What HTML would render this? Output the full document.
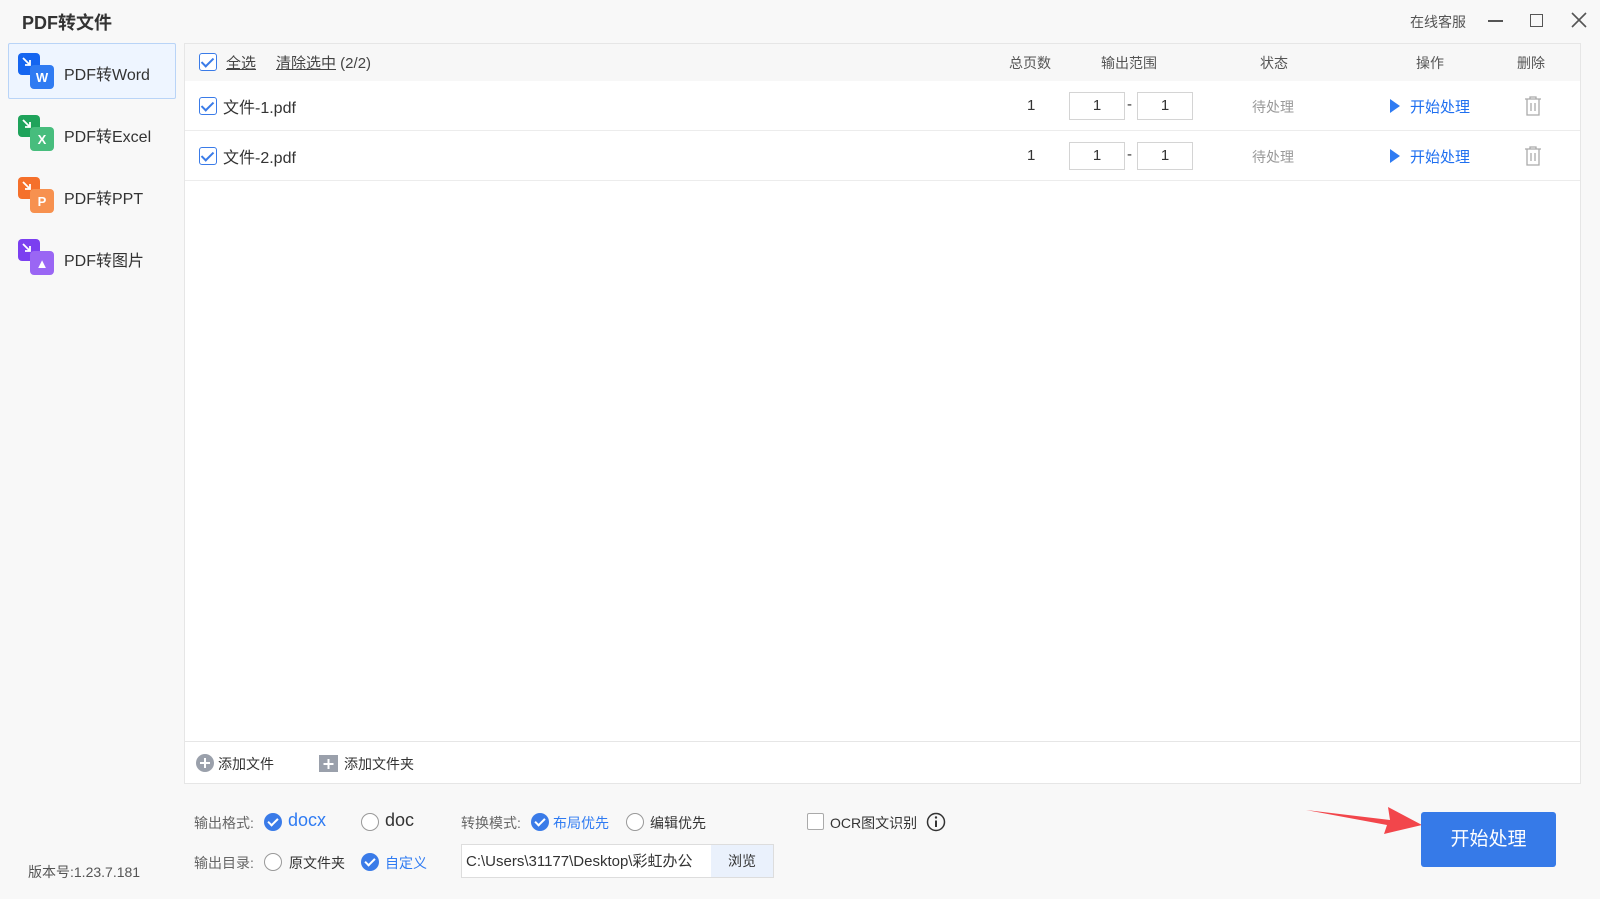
<!DOCTYPE html>
<html><head><meta charset="utf-8"><style>
*{margin:0;padding:0;box-sizing:border-box}
body{width:1600px;height:899px;background:#f8f8f8;font-family:"Liberation Sans","Noto Sans CJK SC",sans-serif;color:#333;position:relative;overflow:hidden;font-size:15px}
.a{position:absolute;white-space:nowrap}
.cb{position:absolute;width:18px;height:18px;border:1.5px solid #3a7be8;border-radius:3px;background:#fff}
.cb:after{content:"";position:absolute;left:4px;top:1px;width:5px;height:10px;border:solid #3a7be8;border-width:0 2px 2px 0;transform:rotate(45deg)}
.rc{position:absolute;width:18px;height:18px;border-radius:50%;background:#3a7be8}
.rc:after{content:"";position:absolute;left:6px;top:3px;width:4px;height:8px;border:solid #fff;border-width:0 2px 2px 0;transform:rotate(45deg)}
.ro{position:absolute;width:18px;height:18px;border-radius:50%;border:1.5px solid #999;background:#fff}
.inp{position:absolute;width:56px;height:28px;border:1px solid #d4d4d4;background:#fff;text-align:center;line-height:26px;font-size:15px}
.ic{position:absolute;width:36px;height:36px}
.ic .b1{position:absolute;left:0;top:0;width:22px;height:22px;border-radius:4px}
.ic .b1 svg{position:absolute;left:4px;top:4px}
.ic .b2{position:absolute;left:12px;top:12px;width:24px;height:24px;border-radius:4px;color:#fff;font-weight:bold;font-size:13px;text-align:center;line-height:26px}
.nav{position:absolute;left:64px;font-size:16px;color:#333}
</style></head><body>
<div class="a" style="left:22px;top:9px;font-size:18px;font-weight:bold;color:#333">PDF转文件</div>
<div class="a" style="left:1410px;top:12px;font-size:14px;color:#555">在线客服</div>
<div class="a" style="left:1488px;top:20px;width:15px;height:1.5px;background:#555"></div>
<div class="a" style="left:1530px;top:14px;width:13px;height:13px;border:1.5px solid #555"></div>
<svg class="a" style="left:1571px;top:12px" width="16" height="16"><path d="M1 1L15 15M15 1L1 15" stroke="#555" stroke-width="1.6"/></svg>

<div class="a" style="left:8px;top:43px;width:168px;height:56px;background:#eef5ff;border:1px solid #b9d4f7;border-radius:2px"></div>
<div class="ic" style="left:18px;top:53px"><div class="b1" style="background:#1565f0"><svg width="10" height="10"><path d="M1 1L8 8M8 3V8H3" stroke="#fff" stroke-width="1.8" fill="none"/></svg></div><div class="b2" style="background:#2f7bf2">W</div></div>
<div class="nav" style="top:61px">PDF转Word</div>
<div class="ic" style="left:18px;top:115px"><div class="b1" style="background:#1fa35b"><svg width="10" height="10"><path d="M1 1L8 8M8 3V8H3" stroke="#fff" stroke-width="1.8" fill="none"/></svg></div><div class="b2" style="background:#47bd7d">X</div></div>
<div class="nav" style="top:123px">PDF转Excel</div>
<div class="ic" style="left:18px;top:177px"><div class="b1" style="background:#f5702b"><svg width="10" height="10"><path d="M1 1L8 8M8 3V8H3" stroke="#fff" stroke-width="1.8" fill="none"/></svg></div><div class="b2" style="background:#f7914f">P</div></div>
<div class="nav" style="top:185px">PDF转PPT</div>
<div class="ic" style="left:18px;top:239px"><div class="b1" style="background:#7b3ff0"><svg width="10" height="10"><path d="M1 1L8 8M8 3V8H3" stroke="#fff" stroke-width="1.8" fill="none"/></svg></div><div class="b2" style="background:#9a66f4">▲</div></div>
<div class="nav" style="top:247px">PDF转图片</div>
<div class="a" style="left:28px;top:862px;font-size:14px;color:#555">版本号:1.23.7.181</div>

<div class="a" style="left:184px;top:43px;width:1397px;height:741px;background:#fff;border:1px solid #e6e6e6"></div>
<div class="a" style="left:185px;top:44px;width:1395px;height:37px;background:#f7f7f7"></div>
<div class="cb" style="left:199px;top:53px"></div>
<div class="a" style="left:226px;top:52px;text-decoration:underline;color:#444">全选</div>
<div class="a" style="left:276px;top:52px;color:#444"><u>清除选中</u> (2/2)</div>
<div class="a" style="left:1009px;top:53px;font-size:14px;color:#555">总页数</div>
<div class="a" style="left:1101px;top:53px;font-size:14px;color:#555">输出范围</div>
<div class="a" style="left:1260px;top:53px;font-size:14px;color:#555">状态</div>
<div class="a" style="left:1416px;top:53px;font-size:14px;color:#555">操作</div>
<div class="a" style="left:1517px;top:53px;font-size:14px;color:#555">删除</div>

<div class="a" style="left:185px;top:130px;width:1395px;height:1px;background:#ececec"></div>
<div class="a" style="left:185px;top:180px;width:1395px;height:1px;background:#ececec"></div>

<div class="cb" style="left:199px;top:97px"></div>
<div class="a" style="left:223px;top:94px;font-size:16px">文件-1.pdf</div>
<div class="a" style="left:1027px;top:97px">1</div>
<div class="inp" style="left:1069px;top:92px">1</div><div class="a" style="left:1127px;top:96px">-</div><div class="inp" style="left:1137px;top:92px">1</div>
<div class="a" style="left:1252px;top:97px;font-size:14px;color:#999">待处理</div>
<svg class="a" style="left:1390px;top:99px" width="10" height="14"><path d="M0 0L10 7L0 14Z" fill="#2f7bf2"/></svg>
<div class="a" style="left:1410px;top:96px;color:#1e6ff0">开始处理</div>
<svg class="a" style="left:1524px;top:96px" width="18" height="20"><path d="M1 3H17M6 3V1H12V3M3 3V19H15V3M7 7V15M11 7V15" stroke="#aaa" stroke-width="1.3" fill="none"/></svg>

<div class="cb" style="left:199px;top:147px"></div>
<div class="a" style="left:223px;top:144px;font-size:16px">文件-2.pdf</div>
<div class="a" style="left:1027px;top:147px">1</div>
<div class="inp" style="left:1069px;top:142px">1</div><div class="a" style="left:1127px;top:146px">-</div><div class="inp" style="left:1137px;top:142px">1</div>
<div class="a" style="left:1252px;top:147px;font-size:14px;color:#999">待处理</div>
<svg class="a" style="left:1390px;top:149px" width="10" height="14"><path d="M0 0L10 7L0 14Z" fill="#2f7bf2"/></svg>
<div class="a" style="left:1410px;top:146px;color:#1e6ff0">开始处理</div>
<svg class="a" style="left:1524px;top:146px" width="18" height="20"><path d="M1 3H17M6 3V1H12V3M3 3V19H15V3M7 7V15M11 7V15" stroke="#aaa" stroke-width="1.3" fill="none"/></svg>

<div class="a" style="left:185px;top:741px;width:1395px;height:1px;background:#e6e6e6"></div>
<svg class="a" style="left:196px;top:754px" width="18" height="18"><circle cx="9" cy="9" r="9" fill="#9aa0ab"/><path d="M9 4V14M4 9H14" stroke="#fff" stroke-width="2"/></svg>
<div class="a" style="left:218px;top:754px;font-size:14px">添加文件</div>
<svg class="a" style="left:319px;top:755px" width="19" height="17"><rect width="19" height="17" fill="#9aa0ab"/><path d="M9.5 4V14M4.5 9H14.5" stroke="#fff" stroke-width="2"/></svg>
<div class="a" style="left:344px;top:754px;font-size:14px">添加文件夹</div>

<div class="a" style="left:194px;top:813px;font-size:14px;color:#666">输出格式:</div>
<div class="rc" style="left:264px;top:813px"></div>
<div class="a" style="left:288px;top:810px;font-size:18px;color:#2f7bf2">docx</div>
<div class="ro" style="left:361px;top:813px"></div>
<div class="a" style="left:385px;top:810px;font-size:18px;color:#333">doc</div>
<div class="a" style="left:461px;top:813px;font-size:14px;color:#666">转换模式:</div>
<div class="rc" style="left:531px;top:813px"></div>
<div class="a" style="left:553px;top:813px;font-size:14px;color:#2f7bf2">布局优先</div>
<div class="ro" style="left:626px;top:813px"></div>
<div class="a" style="left:650px;top:813px;font-size:14px">编辑优先</div>
<div class="a" style="left:807px;top:813px;width:17px;height:17px;border:1px solid #aaa;background:#fff;border-radius:2px"></div>
<div class="a" style="left:830px;top:813px;font-size:14px">OCR图文识别</div>
<svg class="a" style="left:926px;top:812px" width="20" height="20"><circle cx="10" cy="10" r="8.5" fill="none" stroke="#333" stroke-width="1.5"/><path d="M10 8.5V15" stroke="#333" stroke-width="2"/><circle cx="10" cy="5.5" r="1.2" fill="#333"/></svg>

<div class="a" style="left:194px;top:853px;font-size:14px;color:#666">输出目录:</div>
<div class="ro" style="left:264px;top:853px"></div>
<div class="a" style="left:289px;top:853px;font-size:14px">原文件夹</div>
<div class="rc" style="left:361px;top:853px"></div>
<div class="a" style="left:385px;top:853px;font-size:14px;color:#2f7bf2">自定义</div>
<div class="a" style="left:461px;top:844px;width:313px;height:34px;border:1px solid #ddd;background:#fff"></div>
<div class="a" style="left:466px;top:850px;font-size:15px;width:244px;overflow:hidden">C:\Users\31177\Desktop\彩虹办公</div>
<div class="a" style="left:711px;top:845px;width:62px;height:32px;background:#eaf1fc;text-align:center;line-height:32px;font-size:14px">浏览</div>

<svg class="a" style="left:1300px;top:800px" width="125" height="40"><path d="M6 10L90 20L88 7L122 25L84 34L87 25Z" fill="#f2464b"/></svg>
<div class="a" style="left:1421px;top:812px;width:135px;height:55px;background:#367ae8;border-radius:3px;color:#fff;font-size:19px;text-align:center;line-height:55px">开始处理</div>
</body></html>
